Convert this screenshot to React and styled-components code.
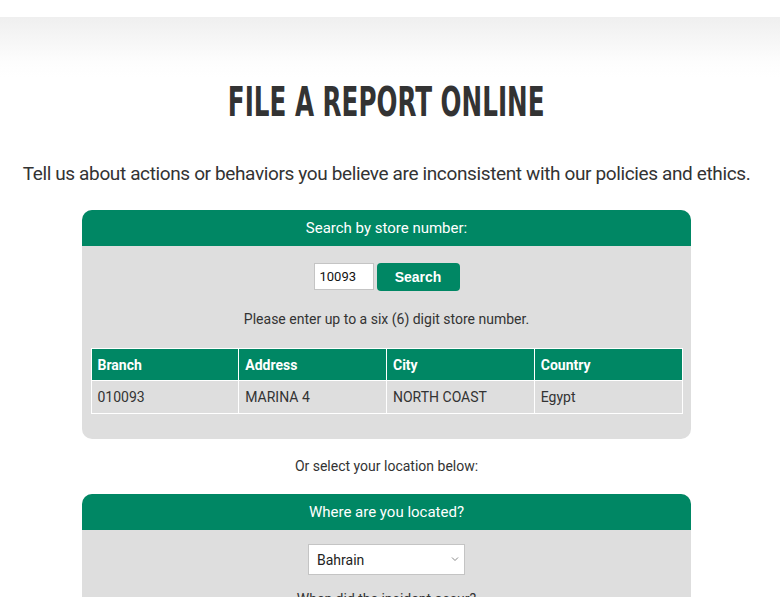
import React from "react";
import styled, { createGlobalStyle } from "styled-components";

const Global = createGlobalStyle`
  html, body { margin: 0; padding: 0; background: #fff; }
  body { font-family: Roboto, "Noto Sans", sans-serif; color: #333; }
`;

const Page = styled.div`
  width: 773px;
  padding-top: 17px;
`;

const Hero = styled.div`
  width: 780px;
  background: linear-gradient(to bottom, #efefef 0px, #fdfdfd 45px, #ffffff 60px);
  padding-top: 63px;
`;

const HeroInner = styled.div`
  width: 773px;
  display: flex;
  flex-direction: column;
  align-items: center;
`;

const Title = styled.h1`
  margin: 0;
  font-family: "DejaVu Sans", sans-serif;
  font-stretch: condensed;
  font-weight: 700;
  font-size: 40px;
  line-height: 44px;
  color: #333;
  transform: scaleX(0.685);
  white-space: nowrap;
`;

const Lead = styled.p`
  margin: 37px 0 0;
  font-size: 19px;
  line-height: 26px;
  color: #333;
  white-space: nowrap;
  letter-spacing: -0.37px;
`;

const Card = styled.section`
  width: 609px;
  margin: ${(p) => p.$top}px auto 0;
  background: #dedede;
  border-radius: 10px;
  overflow: hidden;
  padding-bottom: ${(p) => p.$pb}px;
`;

const CardHead = styled.div`
  height: 36px;
  background: #008764;
  color: #fff;
  font-size: 15px;
  display: flex;
  align-items: center;
  justify-content: center;
`;

const SearchRow = styled.div`
  display: flex;
  justify-content: center;
  gap: 3px;
  margin-top: 17px;
`;

const NumInput = styled.input`
  width: 60px;
  height: 27px;
  box-sizing: border-box;
  border: 1px solid #c4c4c4;
  background: #fff;
  font-family: Roboto, sans-serif;
  font-size: 13px;
  padding: 0 5px;
  color: #111;
  outline: none;
`;

const Btn = styled.button`
  width: 83px;
  height: 28px;
  border: none;
  border-radius: 4px;
  background: #008764;
  color: #fff;
  font-family: "Liberation Sans", Arial, sans-serif;
  font-weight: 700;
  font-size: 14px;
`;

const Note = styled.p`
  margin: ${(p) => p.$mt}px 0 0;
  text-align: center;
  font-size: 14px;
  line-height: 20px;
  color: #333;
`;

const Table = styled.table`
  width: 592px;
  margin: 19px auto 0;
  border-collapse: collapse;
  table-layout: fixed;
  border: 1px solid #fff;
`;

const Th = styled.th`
  background: #008764;
  color: #fff;
  text-align: left;
  font-weight: 700;
  font-size: 14px;
  height: 32px;
  padding: 0 6px;
  border: 1px solid #fff;
  box-sizing: border-box;
`;

const Td = styled.td`
  height: 33px;
  padding: 0 6px;
  font-size: 14px;
  color: #333;
  border: 1px solid #fff;
  box-sizing: border-box;
`;

const SelectWrap = styled.div`
  display: flex;
  justify-content: center;
  margin-top: 14px;
`;

const SelectBox = styled.div`
  position: relative;
  width: 157px;
  height: 31px;
`;

const Select = styled.select`
  appearance: none;
  -webkit-appearance: none;
  width: 100%;
  height: 100%;
  border: 1px solid #c4c4c4;
  border-radius: 0;
  background: #fff;
  font-family: Roboto, sans-serif;
  font-size: 14px;
  padding: 0 8px;
  color: #222;
  outline: none;
`;

const Chevron = styled.svg`
  position: absolute;
  right: 6px;
  top: 12px;
  width: 8px;
  height: 6px;
  pointer-events: none;
`;

export default function App() {
  return (
    <Page>
      <Global />
      <Hero>
        <HeroInner>
          <Title>FILE A REPORT ONLINE</Title>
          <Lead>
            Tell us about actions or behaviors you believe are inconsistent with our policies and ethics.
          </Lead>
        </HeroInner>
      </Hero>
      <Card $top={23} $pb={25}>
        <CardHead>Search by store number:</CardHead>
        <SearchRow>
          <NumInput defaultValue="10093" />
          <Btn>Search</Btn>
        </SearchRow>
        <Note $mt={18}>Please enter up to a six (6) digit store number.</Note>
        <Table>
          <thead>
            <tr>
              <Th>Branch</Th>
              <Th>Address</Th>
              <Th>City</Th>
              <Th>Country</Th>
            </tr>
          </thead>
          <tbody>
            <tr>
              <Td>010093</Td>
              <Td>MARINA 4</Td>
              <Td>NORTH COAST</Td>
              <Td>Egypt</Td>
            </tr>
          </tbody>
        </Table>
      </Card>
      <Note $mt={17}>Or select your location below:</Note>
      <Card $top={18} $pb={40}>
        <CardHead>Where are you located?</CardHead>
        <SelectWrap>
          <SelectBox>
            <Select defaultValue="Bahrain">
              <option>Bahrain</option>
              <option>Egypt</option>
            </Select>
            <Chevron viewBox="0 0 8 6">
              <path d="M1 1.5 L4 4.5 L7 1.5" fill="none" stroke="#888" strokeWidth="1" />
            </Chevron>
          </SelectBox>
        </SelectWrap>
        <Note $mt={14}>When did the incident occur?</Note>
      </Card>
    </Page>
  );
}
